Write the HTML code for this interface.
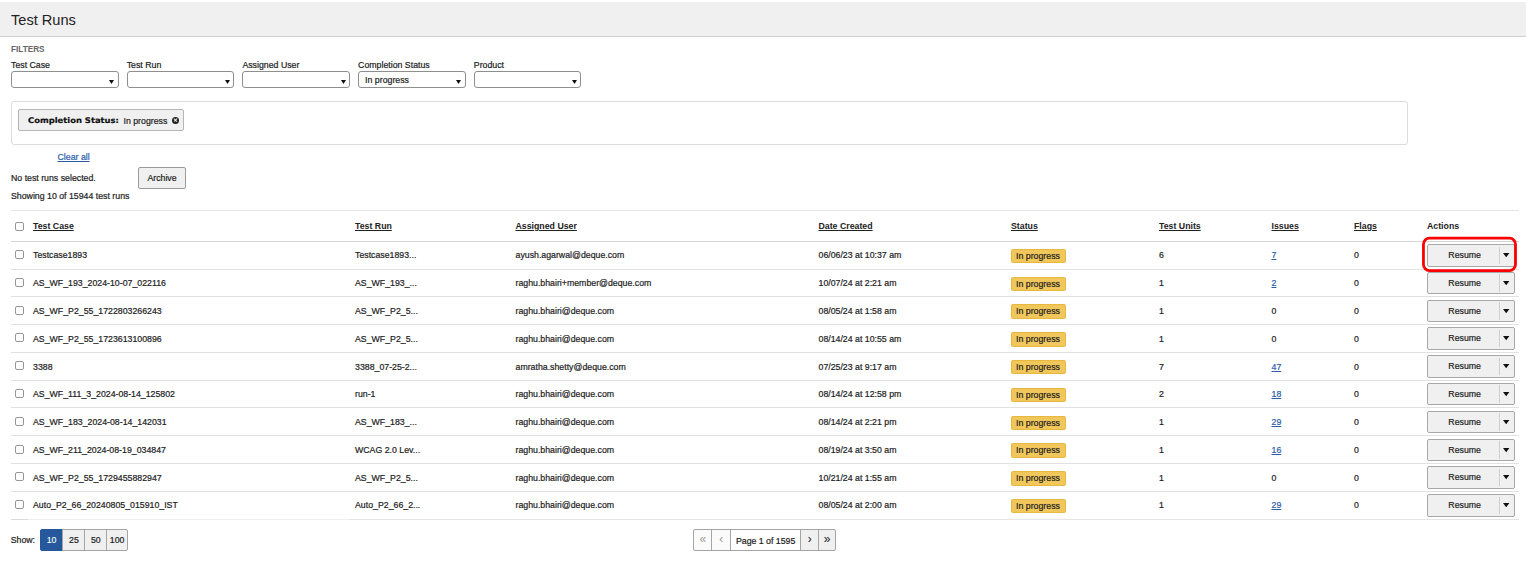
<!DOCTYPE html>
<html lang="en"><head><meta charset="utf-8"><title>Test Runs</title>
<style>
*{box-sizing:border-box;margin:0;padding:0}
html,body{width:1526px;height:570px;overflow:hidden;background:#fff}
body{font-family:"Liberation Sans",Arial,sans-serif;font-size:8.78px;color:#1c1c1c;position:relative;-webkit-text-stroke:0.2px}
.abs{position:absolute;white-space:nowrap;line-height:10px}
.hdr{position:absolute;left:0;top:2px;width:1526px;height:34.5px;background:#f0f0f0;border-bottom:1px solid #cfcfcf}
.hdr h1{-webkit-text-stroke:0;position:absolute;left:11px;top:10.2px;font-size:14.6px;font-weight:normal;line-height:17px;color:#222}
.filters{-webkit-text-stroke:0;left:11px;top:45px;font-size:8.2px;letter-spacing:-0.05px;font-weight:bold;color:#666;letter-spacing:0}
.lbl{top:60.1px}
.sel{position:absolute;top:71.4px;width:107.5px;height:17px;border:1px solid #8f8f8f;border-radius:3px;background:#fff;font-size:8.78px;line-height:16.4px;padding-left:6px}
.sel svg{position:absolute;right:3.2px;top:7.4px}
.chips{position:absolute;left:11px;top:101px;width:1396.6px;height:43.6px;border:1px solid #dcdcdc;border-radius:3px}
.chip{position:absolute;left:18px;top:108.7px;width:166px;height:22px;border:1px solid #b5b5b5;border-radius:2px;background:#f0f0f0}
.chip b{position:absolute;left:9px;top:6.5px;font-family:"DejaVu Sans","Liberation Sans",sans-serif;font-size:7.8px;line-height:10px;font-weight:bold;color:#111;transform:scaleX(1.077);transform-origin:0 50%}
.chip span{position:absolute;left:104.5px;top:6px;line-height:10px}
.chip i{position:absolute;left:153px;top:7px;width:7.4px;height:7.4px;border-radius:50%;background:#222}
.chip i:before,.chip i:after{content:"";position:absolute;left:3.1px;top:1.5px;width:1.2px;height:4.4px;background:#f0f0f0;transform:rotate(45deg)}
.chip i:after{transform:rotate(-45deg)}
a{color:#2b5ca8;text-decoration:underline}
.btn{position:absolute;border:1px solid #9a9a9a;border-radius:2px;background:#f0f0f0;text-align:center;color:#222}
.line{position:absolute;left:11px;width:1507.5px;height:1px;background:#e1e1e1}
.th{-webkit-text-stroke:0;font-weight:bold;text-decoration:underline;color:#222}
.cb{position:absolute;left:14.9px;width:9px;height:9px;border:1px solid #969696;border-radius:2px;background:#fff}
.badge{position:absolute;left:1010.5px;width:55px;height:14.5px;background:#f1c75b;border:1px solid #e6b840;border-radius:1.5px;text-align:center;line-height:13.6px;color:#222}
.rb{position:absolute;left:1426.5px;width:88.6px;height:22.6px;border:1px solid #a8a8a8;border-radius:2px;background:#f0f0f0}
.rb span{position:absolute;left:20.8px;top:0;line-height:20.8px}
.rb u{position:absolute;left:71.6px;top:1.5px;width:1px;height:17.6px;background:#cfcfcf}
.rb svg{position:absolute;left:75.7px;top:8.2px}
.red{position:absolute;left:1422px;top:237px;width:95.5px;height:35px;border:2.8px solid #e8000d;border-radius:6.5px}
.pg{position:absolute;top:529px;height:22px;border:1px solid #a5a5a5;background:#f0f0f0;text-align:center;line-height:20.6px}
</style></head><body>
<div class="hdr"><h1>Test Runs</h1></div>
<div class="abs filters">FILTERS</div>

<div class="abs lbl" style="left:11.0px">Test Case</div>
<div class="sel" style="left:11.0px"><svg width="5" height="4" viewBox="0 0 5 4"><polygon points="0,0 5,0 2.5,4" fill="#111"/></svg></div>
<div class="abs lbl" style="left:126.7px">Test Run</div>
<div class="sel" style="left:126.7px"><svg width="5" height="4" viewBox="0 0 5 4"><polygon points="0,0 5,0 2.5,4" fill="#111"/></svg></div>
<div class="abs lbl" style="left:242.4px">Assigned User</div>
<div class="sel" style="left:242.4px"><svg width="5" height="4" viewBox="0 0 5 4"><polygon points="0,0 5,0 2.5,4" fill="#111"/></svg></div>
<div class="abs lbl" style="left:358.1px">Completion Status</div>
<div class="sel" style="left:358.1px">In progress<svg width="5" height="4" viewBox="0 0 5 4"><polygon points="0,0 5,0 2.5,4" fill="#111"/></svg></div>
<div class="abs lbl" style="left:473.8px">Product</div>
<div class="sel" style="left:473.8px"><svg width="5" height="4" viewBox="0 0 5 4"><polygon points="0,0 5,0 2.5,4" fill="#111"/></svg></div>
<div class="chips"></div>
<div class="chip"><b>Completion Status:</b><span>In progress</span><i></i></div>
<div class="abs" style="left:57.5px;top:151.5px"><a>Clear all</a></div>
<div class="abs" style="left:11px;top:173px">No test runs selected.</div>
<div class="btn" style="left:138px;top:167px;width:48px;height:22px;line-height:20.5px">Archive</div>
<div class="abs" style="left:11px;top:191px">Showing 10 of 15944 test runs</div>
<div class="line" style="top:210px;background:#e4e4e4"></div>

<div class="cb" style="top:222.3px"></div>
<div class="abs th" style="left:33px;top:221px;">Test Case</div>
<div class="abs th" style="left:355px;top:221px;">Test Run</div>
<div class="abs th" style="left:515.5px;top:221px;">Assigned User</div>
<div class="abs th" style="left:818.5px;top:221px;">Date Created</div>
<div class="abs th" style="left:1011px;top:221px;">Status</div>
<div class="abs th" style="left:1159px;top:221px;">Test Units</div>
<div class="abs th" style="left:1271.5px;top:221px;">Issues</div>
<div class="abs th" style="left:1354px;top:221px;">Flags</div>
<div class="abs" style="left:1427px;top:221px;font-weight:bold;-webkit-text-stroke:0;">Actions</div>
<div class="line" style="top:240.7px;background:#d4d4d4"></div>
<div class="cb" style="top:250.1px"></div>
<div class="abs" style="left:33px;top:250.4px">Testcase1893</div>
<div class="abs" style="left:355px;top:250.4px">Testcase1893...</div>
<div class="abs" style="left:515.5px;top:250.4px">ayush.agarwal@deque.com</div>
<div class="abs" style="left:818.5px;top:250.4px">06/06/23 at 10:37 am</div>
<div class="badge" style="top:248.8px">In progress</div>
<div class="abs" style="left:1159px;top:250.4px">6</div>
<div class="abs" style="left:1271.5px;top:250.4px"><a>7</a></div>
<div class="abs" style="left:1354px;top:250.4px">0</div>
<div class="rb" style="top:244.0px"><span>Resume</span><u></u><svg width="6.4" height="4.3" viewBox="0 0 6.4 4.3"><polygon points="0,0 6.4,0 3.2,4.3" fill="#111"/></svg></div>
<div class="line" style="top:268.5px"></div>
<div class="cb" style="top:277.9px"></div>
<div class="abs" style="left:33px;top:278.2px">AS_WF_193_2024-10-07_022116</div>
<div class="abs" style="left:355px;top:278.2px">AS_WF_193_...</div>
<div class="abs" style="left:515.5px;top:278.2px">raghu.bhairi+member@deque.com</div>
<div class="abs" style="left:818.5px;top:278.2px">10/07/24 at 2:21 am</div>
<div class="badge" style="top:276.6px">In progress</div>
<div class="abs" style="left:1159px;top:278.2px">1</div>
<div class="abs" style="left:1271.5px;top:278.2px"><a>2</a></div>
<div class="abs" style="left:1354px;top:278.2px">0</div>
<div class="rb" style="top:271.8px"><span>Resume</span><u></u><svg width="6.4" height="4.3" viewBox="0 0 6.4 4.3"><polygon points="0,0 6.4,0 3.2,4.3" fill="#111"/></svg></div>
<div class="line" style="top:296.3px"></div>
<div class="cb" style="top:305.7px"></div>
<div class="abs" style="left:33px;top:306.0px">AS_WF_P2_55_1722803266243</div>
<div class="abs" style="left:355px;top:306.0px">AS_WF_P2_5...</div>
<div class="abs" style="left:515.5px;top:306.0px">raghu.bhairi@deque.com</div>
<div class="abs" style="left:818.5px;top:306.0px">08/05/24 at 1:58 am</div>
<div class="badge" style="top:304.4px">In progress</div>
<div class="abs" style="left:1159px;top:306.0px">1</div>
<div class="abs" style="left:1271.5px;top:306.0px">0</div>
<div class="abs" style="left:1354px;top:306.0px">0</div>
<div class="rb" style="top:299.6px"><span>Resume</span><u></u><svg width="6.4" height="4.3" viewBox="0 0 6.4 4.3"><polygon points="0,0 6.4,0 3.2,4.3" fill="#111"/></svg></div>
<div class="line" style="top:324.0px"></div>
<div class="cb" style="top:333.4px"></div>
<div class="abs" style="left:33px;top:333.7px">AS_WF_P2_55_1723613100896</div>
<div class="abs" style="left:355px;top:333.7px">AS_WF_P2_5...</div>
<div class="abs" style="left:515.5px;top:333.7px">raghu.bhairi@deque.com</div>
<div class="abs" style="left:818.5px;top:333.7px">08/14/24 at 10:55 am</div>
<div class="badge" style="top:332.1px">In progress</div>
<div class="abs" style="left:1159px;top:333.7px">1</div>
<div class="abs" style="left:1271.5px;top:333.7px">0</div>
<div class="abs" style="left:1354px;top:333.7px">0</div>
<div class="rb" style="top:327.3px"><span>Resume</span><u></u><svg width="6.4" height="4.3" viewBox="0 0 6.4 4.3"><polygon points="0,0 6.4,0 3.2,4.3" fill="#111"/></svg></div>
<div class="line" style="top:351.8px"></div>
<div class="cb" style="top:361.2px"></div>
<div class="abs" style="left:33px;top:361.5px">3388</div>
<div class="abs" style="left:355px;top:361.5px">3388_07-25-2...</div>
<div class="abs" style="left:515.5px;top:361.5px">amratha.shetty@deque.com</div>
<div class="abs" style="left:818.5px;top:361.5px">07/25/23 at 9:17 am</div>
<div class="badge" style="top:359.9px">In progress</div>
<div class="abs" style="left:1159px;top:361.5px">7</div>
<div class="abs" style="left:1271.5px;top:361.5px"><a>47</a></div>
<div class="abs" style="left:1354px;top:361.5px">0</div>
<div class="rb" style="top:355.1px"><span>Resume</span><u></u><svg width="6.4" height="4.3" viewBox="0 0 6.4 4.3"><polygon points="0,0 6.4,0 3.2,4.3" fill="#111"/></svg></div>
<div class="line" style="top:379.6px"></div>
<div class="cb" style="top:389.0px"></div>
<div class="abs" style="left:33px;top:389.3px">AS_WF_111_3_2024-08-14_125802</div>
<div class="abs" style="left:355px;top:389.3px">run-1</div>
<div class="abs" style="left:515.5px;top:389.3px">raghu.bhairi@deque.com</div>
<div class="abs" style="left:818.5px;top:389.3px">08/14/24 at 12:58 pm</div>
<div class="badge" style="top:387.7px">In progress</div>
<div class="abs" style="left:1159px;top:389.3px">2</div>
<div class="abs" style="left:1271.5px;top:389.3px"><a>18</a></div>
<div class="abs" style="left:1354px;top:389.3px">0</div>
<div class="rb" style="top:382.9px"><span>Resume</span><u></u><svg width="6.4" height="4.3" viewBox="0 0 6.4 4.3"><polygon points="0,0 6.4,0 3.2,4.3" fill="#111"/></svg></div>
<div class="line" style="top:407.4px"></div>
<div class="cb" style="top:416.8px"></div>
<div class="abs" style="left:33px;top:417.1px">AS_WF_183_2024-08-14_142031</div>
<div class="abs" style="left:355px;top:417.1px">AS_WF_183_...</div>
<div class="abs" style="left:515.5px;top:417.1px">raghu.bhairi@deque.com</div>
<div class="abs" style="left:818.5px;top:417.1px">08/14/24 at 2:21 pm</div>
<div class="badge" style="top:415.5px">In progress</div>
<div class="abs" style="left:1159px;top:417.1px">1</div>
<div class="abs" style="left:1271.5px;top:417.1px"><a>29</a></div>
<div class="abs" style="left:1354px;top:417.1px">0</div>
<div class="rb" style="top:410.7px"><span>Resume</span><u></u><svg width="6.4" height="4.3" viewBox="0 0 6.4 4.3"><polygon points="0,0 6.4,0 3.2,4.3" fill="#111"/></svg></div>
<div class="line" style="top:435.2px"></div>
<div class="cb" style="top:444.6px"></div>
<div class="abs" style="left:33px;top:444.9px">AS_WF_211_2024-08-19_034847</div>
<div class="abs" style="left:355px;top:444.9px">WCAG 2.0 Lev...</div>
<div class="abs" style="left:515.5px;top:444.9px">raghu.bhairi@deque.com</div>
<div class="abs" style="left:818.5px;top:444.9px">08/19/24 at 3:50 am</div>
<div class="badge" style="top:443.3px">In progress</div>
<div class="abs" style="left:1159px;top:444.9px">1</div>
<div class="abs" style="left:1271.5px;top:444.9px"><a>16</a></div>
<div class="abs" style="left:1354px;top:444.9px">0</div>
<div class="rb" style="top:438.5px"><span>Resume</span><u></u><svg width="6.4" height="4.3" viewBox="0 0 6.4 4.3"><polygon points="0,0 6.4,0 3.2,4.3" fill="#111"/></svg></div>
<div class="line" style="top:462.9px"></div>
<div class="cb" style="top:472.3px"></div>
<div class="abs" style="left:33px;top:472.6px">AS_WF_P2_55_1729455882947</div>
<div class="abs" style="left:355px;top:472.6px">AS_WF_P2_5...</div>
<div class="abs" style="left:515.5px;top:472.6px">raghu.bhairi@deque.com</div>
<div class="abs" style="left:818.5px;top:472.6px">10/21/24 at 1:55 am</div>
<div class="badge" style="top:471.0px">In progress</div>
<div class="abs" style="left:1159px;top:472.6px">1</div>
<div class="abs" style="left:1271.5px;top:472.6px">0</div>
<div class="abs" style="left:1354px;top:472.6px">0</div>
<div class="rb" style="top:466.2px"><span>Resume</span><u></u><svg width="6.4" height="4.3" viewBox="0 0 6.4 4.3"><polygon points="0,0 6.4,0 3.2,4.3" fill="#111"/></svg></div>
<div class="line" style="top:490.7px"></div>
<div class="cb" style="top:500.1px"></div>
<div class="abs" style="left:33px;top:500.4px">Auto_P2_66_20240805_015910_IST</div>
<div class="abs" style="left:355px;top:500.4px">Auto_P2_66_2...</div>
<div class="abs" style="left:515.5px;top:500.4px">raghu.bhairi@deque.com</div>
<div class="abs" style="left:818.5px;top:500.4px">08/05/24 at 2:00 am</div>
<div class="badge" style="top:498.8px">In progress</div>
<div class="abs" style="left:1159px;top:500.4px">1</div>
<div class="abs" style="left:1271.5px;top:500.4px"><a>29</a></div>
<div class="abs" style="left:1354px;top:500.4px">0</div>
<div class="rb" style="top:494.0px"><span>Resume</span><u></u><svg width="6.4" height="4.3" viewBox="0 0 6.4 4.3"><polygon points="0,0 6.4,0 3.2,4.3" fill="#111"/></svg></div>
<div class="line" style="top:518.5px;background:#e4e4e4"></div>
<div class="line" style="top:518.5px;background:#efefef;left:28px;width:322px"></div>
<div class="line" style="top:518.5px;background:#dadada;width:17px"></div>
<svg style="position:absolute;left:1418px;top:232px" width="104" height="44" viewBox="0 0 104 44"><rect x="5.45" y="6.2" width="92.05" height="32.4" rx="6" ry="6" fill="none" stroke="#ff0000" stroke-width="2.8"/></svg>
<div class="abs" style="left:10.7px;top:535px">Show:</div>
<div class="pg" style="left:39.8px;width:23.6px;background:#25599c;color:#fff;border-color:#25599c;-webkit-text-stroke:0.1px;border-radius:2px 0 0 2px;">10</div>
<div class="pg" style="left:62.4px;width:23.0px;">25</div>
<div class="pg" style="left:84.4px;width:22.8px;">50</div>
<div class="pg" style="left:106.2px;width:21.8px;border-radius:0 2px 2px 0;">100</div>
<div class="pg" style="left:693.4px;width:19.0px;color:#9a9a9a;background:#fbfbfb;font-size:12px;line-height:19.8px;-webkit-text-stroke:0;border-radius:2px 0 0 2px;">«</div>
<div class="pg" style="left:711.4px;width:19.7px;color:#9a9a9a;background:#fbfbfb;font-size:12px;line-height:19.8px;-webkit-text-stroke:0;">‹</div>
<div class="pg" style="left:730.1px;width:71.1px;background:#fff;line-height:22.4px;">Page 1 of 1595</div>
<div class="pg" style="left:800.2px;width:19.1px;background:#f0f0f0;color:#222;font-size:12px;line-height:19.8px;-webkit-text-stroke:0;">›</div>
<div class="pg" style="left:818.3px;width:17.7px;background:#f0f0f0;color:#222;font-size:12px;line-height:19.8px;-webkit-text-stroke:0;border-radius:0 2px 2px 0;">»</div>
</body></html>
